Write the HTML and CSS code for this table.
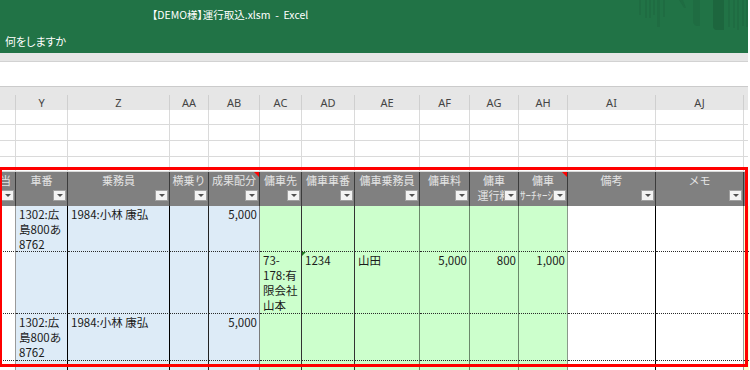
FILE: index.html
```html
<!DOCTYPE html>
<html lang="ja">
<head>
<meta charset="utf-8">
<title>【DEMO様】運行取込.xlsm - Excel</title>
<link rel="stylesheet" href="styles.css">
</head>
<body>
<div class="window">
  <header class="titlebar">
    <div class="title">【DEMO様】運行取込.xlsm&nbsp; - &nbsp;Excel</div>
    <div class="tellme">何をしますか</div>
    <svg class="deco" width="110" height="32" viewBox="0 0 110 32">
      <g fill="#1f6c42">
        <rect x="1" y="0" width="2" height="15"/>
        <rect x="7" y="0" width="2" height="18"/>
        <rect x="11" y="0" width="2" height="18"/>
        <rect x="15" y="0" width="2" height="15"/>
        <rect x="19" y="0" width="3" height="27"/>
        <rect x="25" y="0" width="2" height="17"/>
        <polygon points="41,0 45,0 48,8 46,8"/>
        <path d="M55 0 H62 V26 H60 Q55 26 55 20 Z"/>
        <rect x="90" y="0" width="2" height="27"/>
        <rect x="95" y="0" width="2" height="28"/>
        <rect x="99" y="0" width="2" height="30"/>
        <rect x="104" y="0" width="2" height="26"/>
        <rect x="108" y="0" width="2" height="27"/>
      </g>
      <path d="M75 0 H86 V30 H79 Q75 30 75 26 Z" fill="#1d663e"/>
    </svg>
  </header>
  <div class="ribbon-edge"></div>
  <div class="formula"></div>

  <div class="sheet">
    <div class="row colheads">
      <div></div><div>Y</div><div>Z</div><div>AA</div><div>AB</div><div>AC</div><div>AD</div><div>AE</div><div>AF</div><div>AG</div><div>AH</div><div>AI</div><div>AJ</div><div></div>
    </div>
    <div class="row blank h15"><div></div><div></div><div></div><div></div><div></div><div></div><div></div><div></div><div></div><div></div><div></div><div></div><div></div><div></div></div>
    <div class="row blank h16"><div></div><div></div><div></div><div></div><div></div><div></div><div></div><div></div><div></div><div></div><div></div><div></div><div></div><div></div></div>
    <div class="row blank h16"><div></div><div></div><div></div><div></div><div></div><div></div><div></div><div></div><div></div><div></div><div></div><div></div><div></div><div></div></div>
    <div class="row blank h15"><div></div><div></div><div></div><div></div><div></div><div></div><div></div><div></div><div></div><div></div><div></div><div></div><div></div><div></div></div>

    <div class="row thead">
      <div class="cut">当<span class="dd"></span></div>
      <div>車番<span class="dd"></span></div>
      <div>乗務員<span class="dd"></span></div>
      <div>横乗り<span class="dd"></span></div>
      <div class="cm">成果配分<span class="dd"></span></div>
      <div>傭車先<span class="dd"></span></div>
      <div>傭車車番<span class="dd"></span></div>
      <div>傭車乗務員<span class="dd"></span></div>
      <div>傭車料<span class="dd"></span></div>
      <div>傭車<br>運行料<span class="dd"></span></div>
      <div class="cm left2">傭車<br><span class="l2">ｻｰﾁｬｰｼﾞ</span><span class="dd"></span></div>
      <div>備考<span class="dd"></span></div>
      <div>メモ<span class="dd"></span></div>
      <div></div>
    </div>

    <div class="row data r1">
      <div></div>
      <div class="blue">1302:広<br>島800あ<br>8762</div>
      <div class="blue">1984:小林 康弘</div>
      <div class="blue"></div>
      <div class="blue num">5,000</div>
      <div class="green"></div>
      <div class="green"></div>
      <div class="green"></div>
      <div class="green"></div>
      <div class="green"></div>
      <div class="green"></div>
      <div></div>
      <div></div>
      <div class="yellow"></div>
    </div>

    <div class="row data r2">
      <div></div>
      <div class="blue"></div>
      <div class="blue"></div>
      <div class="blue"></div>
      <div class="blue"></div>
      <div class="green">73-<br>178:有<br>限会社<br>山本</div>
      <div class="green flag">1234</div>
      <div class="green">山田</div>
      <div class="green num">5,000</div>
      <div class="green num">800</div>
      <div class="green num">1,000</div>
      <div></div>
      <div></div>
      <div class="yellow"></div>
    </div>

    <div class="row data r3">
      <div></div>
      <div class="blue">1302:広<br>島800あ<br>8762</div>
      <div class="blue">1984:小林 康弘</div>
      <div class="blue"></div>
      <div class="blue num">5,000</div>
      <div class="green"></div>
      <div class="green"></div>
      <div class="green"></div>
      <div class="green"></div>
      <div class="green"></div>
      <div class="green"></div>
      <div></div>
      <div></div>
      <div class="yellow"></div>
    </div>

    <div class="row data r4">
      <div></div>
      <div class="blue"></div>
      <div class="blue"></div>
      <div class="blue"></div>
      <div class="blue"></div>
      <div class="green"></div>
      <div class="green"></div>
      <div class="green"></div>
      <div class="green"></div>
      <div class="green"></div>
      <div class="green"></div>
      <div></div>
      <div></div>
      <div class="yellow"></div>
    </div>
  </div>

  <div class="highlight"></div>
</div>
</body>
</html>
```

FILE: styles.css
```css
* { box-sizing: border-box; }

html, body {
  margin: 0;
  padding: 0;
  background: #ffffff;
}

body {
  width: 750px;
  height: 370px;
  overflow: hidden;
  font-family: "Noto Sans CJK JP", "Noto Sans", sans-serif;
}

.window {
  position: relative;
  width: 748px;
}

/* ---------- title bar ---------- */
.titlebar {
  position: relative;
  height: 53px;
  background: #217346;
  color: #ffffff;
  font-size: 11px;
  font-feature-settings: "palt" 1;
}

.title {
  padding: 8px 0 0 152px;
  font-size: 10.5px;
  line-height: 14px;
}

.tellme {
  padding: 12px 0 0 5px;
  line-height: 14px;
}

.deco {
  position: absolute;
  top: 0;
  right: 0;
}

.ribbon-edge {
  height: 9px;
  background: #e6e6e6;
  border-bottom: 1px solid #d2d2d2;
}

.formula {
  height: 24px;
  background: #ffffff;
}

/* ---------- sheet ---------- */
.row {
  display: grid;
  grid-template-columns: 16px 52px 102px 39px 51px 42px 53px 65px 50px 49px 49px 88px 88px 4px;
}

.colheads {
  height: 24px;
  background: #e6e6e6;
  border-top: 1px solid #cbcbcb;
  align-items: end;
}

.colheads > div {
  height: 15px;
  border-right: 1px solid #cfcfcf;
  text-align: center;
  font-family: "Noto Sans", sans-serif;
  font-size: 11px;
  line-height: 15px;
  color: #444444;
}

.colheads > div:last-child { border-right: 0; }

.blank { border-bottom: 1px solid #dadada; }
.blank > div { border-right: 1px solid #dadada; }
.blank > div:last-child { border-right: 0; }
.h15 { height: 15px; }
.h16 { height: 16px; }

/* table header */
.thead {
  height: 34px;
  background: #808080;
}

.thead > div {
  position: relative;
  overflow: hidden;
  white-space: nowrap;
  border-right: 1px solid #3c3c3c;
  color: #e4e4e4;
  font-size: 11px;
  line-height: 15px;
  padding-top: 1px;
  text-align: center;
}

.thead > div:last-child { border-right: 0; }

.thead .cut {
  text-align: right;
  padding-right: 6px;
}

.thead .left2 .l2 {
  display: block;
  text-align: left;
  padding-left: 1px;
}

.dd {
  position: absolute;
  right: 1px;
  bottom: 5px;
  width: 13px;
  height: 11px;
  background: #f3f3f3;
  border: 1px solid #a0a0a0;
}

.dd::after {
  content: "";
  position: absolute;
  left: 3px;
  top: 3px;
  border-left: 3px solid transparent;
  border-right: 3px solid transparent;
  border-top: 3px solid #505050;
}

.cm::before {
  content: "";
  position: absolute;
  top: 0;
  right: 0;
  border-top: 5px solid #ff0000;
  border-left: 5px solid transparent;
}

/* data rows */
.data > div {
  position: relative;
  overflow: hidden;
  white-space: nowrap;
  border-right: 1px solid #000000;
  border-bottom: 1px dotted #2a2a2a;
  font-size: 11.5px;
  line-height: 15px;
  padding: 1px 2px 0 3px;
  color: #1b1b1b;
}

.data > div:nth-child(1) { border-right-color: #9a9a9a; }
.data > div:nth-child(4) { border-right-color: #222222; }
.data > div:nth-child(5) { border-right-color: #7a7a7a; }
.data > div:nth-child(6),
.data > div:nth-child(7) { border-right-color: #333333; }
.data > div:nth-child(8),
.data > div:nth-child(9),
.data > div:nth-child(10) { border-right-color: #6b886b; }
.data > div:nth-child(11) { border-right-color: #8a9a8a; }
.data > div:nth-child(13) { border-right-color: #999999; }
.data > div:nth-child(14) { border-right: 0; }

.r1 { height: 46px; }
.r2 { height: 62px; }
.r3 { height: 47px; }
.r4 { height: 12px; }

.blue { background: #ddebf7; }
.green { background: #ccffcc; }
.yellow { background: #ffffcc; }

.data .num {
  text-align: right;
  padding-right: 2px;
}

.flag { padding-left: 4px; }

.flag::before {
  content: "";
  position: absolute;
  top: 0;
  left: 0;
  border-top: 4px solid #1f7a1f;
  border-right: 4px solid transparent;
}

/* annotation rectangle */
.highlight {
  position: absolute;
  left: -1px;
  top: 167px;
  width: 749px;
  height: 200px;
  border: 3px solid #ff0000;
  pointer-events: none;
}
```
